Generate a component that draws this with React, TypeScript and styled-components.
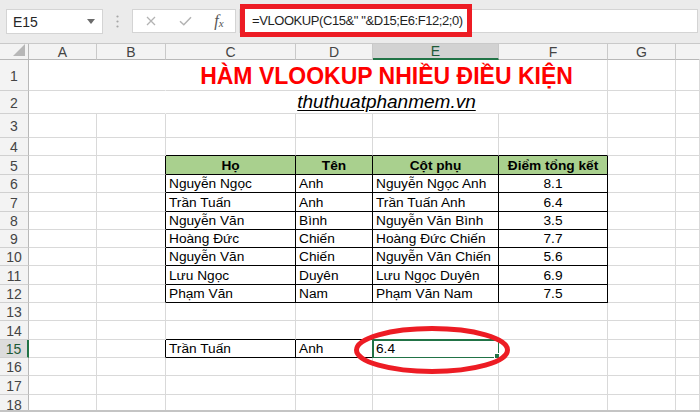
import React from 'react';
import styled, { createGlobalStyle } from 'styled-components';

const GlobalStyle = createGlobalStyle`
  html, body {
    margin: 0;
    padding: 0;
    background: #ffffff;
  }
  body {
    font-family: 'Liberation Sans', Arial, sans-serif;
    overflow: hidden;
  }
`;

const GRID = '#d9d9d9';
const INK = '#000000';
const GREEN = '#217346';

const LETTERS = ['A', 'B', 'C', 'D', 'E', 'F', 'G', ''];
const ROW_HEIGHTS = [31, 23, 24, 18, 19, 18, 19, 18, 18, 18, 19, 18, 18, 19, 18, 18, 19, 19];

const TABLE: Record<number, string[]> = {
  5: ['Họ', 'Tên', 'Cột phụ', 'Điểm tổng kết'],
  6: ['Nguyễn Ngọc', 'Anh', 'Nguyễn Ngọc Anh', '8.1'],
  7: ['Trần Tuấn', 'Anh', 'Trần Tuấn Anh', '6.4'],
  8: ['Nguyễn Văn', 'Bình', 'Nguyễn Văn Bình', '3.5'],
  9: ['Hoàng Đức', 'Chiến', 'Hoàng Đức Chiến', '7.7'],
  10: ['Nguyễn Văn', 'Chiến', 'Nguyễn Văn Chiến', '5.6'],
  11: ['Lưu Ngọc', 'Duyên', 'Lưu Ngọc Duyên', '6.9'],
  12: ['Phạm Văn', 'Nam', 'Phạm Văn Nam', '7.5'],
};

const LOOKUP = ['Trần Tuấn', 'Anh', '6.4'];
const ACTIVE_ROW = 15;
const ACTIVE_COL = 5;

const inBox = (r: number, c: number) =>
  (r >= 5 && r <= 12 && c >= 3 && c <= 6) || (r === 15 && (c === 3 || c === 4));

const cellText = (r: number, c: number): string => {
  if (TABLE[r] && c >= 3 && c <= 6) return TABLE[r][c - 3];
  if (r === 15 && c >= 3 && c <= 5) return LOOKUP[c - 3];
  return '';
};

const App = () => {
  const rows: React.ReactNode[] = [];

  ROW_HEIGHTS.forEach((_, i) => {
    const r = i + 1;
    rows.push(
      <RowHead key={`h${r}`} $active={r === ACTIVE_ROW}>
        {r}
      </RowHead>
    );

    if (r === 1 || r === 2) {
      rows.push(<Cell key={`${r}ab`} $span={2} $right="#ffffff" $bottom={GRID} />);
      rows.push(
        <Cell key={`${r}cf`} $span={4} $right={GRID} $bottom={GRID} $align="center">
          {r === 1 ? <Title>HÀM VLOOKUP NHIỀU ĐIỀU KIỆN</Title> : <Site>thuthuatphanmem.vn</Site>}
        </Cell>
      );
      rows.push(<Cell key={`${r}g`} $right={GRID} $bottom={GRID} />);
      rows.push(<Cell key={`${r}h`} $right={GRID} $bottom={GRID} />);
      return;
    }

    for (let c = 1; c <= 8; c++) {
      const right = inBox(r, c) || inBox(r, c + 1) ? INK : GRID;
      const bottom = inBox(r, c) || inBox(r + 1, c) ? INK : GRID;
      const isHeader = r === 5 && c >= 3 && c <= 6;
      const centered = isHeader || (c === 6 && r >= 6 && r <= 12);
      rows.push(
        <Cell
          key={`${r}-${c}`}
          $right={right}
          $bottom={bottom}
          $align={centered ? 'center' : 'left'}
          $bold={isHeader}
          $fill={isHeader ? '#a9d08e' : undefined}
          $selected={r === ACTIVE_ROW && c === ACTIVE_COL}
        >
          {cellText(r, c)}
        </Cell>
      );
    }
  });

  return (
    <>
      <GlobalStyle />
      <Window>
        <Toolbar>
          <NameBox>
            <span>E15</span>
            <svg width="8" height="5" viewBox="0 0 8 5">
              <path d="M0 0h8L4 5z" fill="#6b6b6b" />
            </svg>
          </NameBox>
          <Grip>
            <svg width="3" height="13" viewBox="0 0 3 13">
              <circle cx="1.5" cy="1.5" r="1.1" fill="#a6a6a6" />
              <circle cx="1.5" cy="6.5" r="1.1" fill="#a6a6a6" />
              <circle cx="1.5" cy="11.5" r="1.1" fill="#a6a6a6" />
            </svg>
          </Grip>
          <FxBox>
            <ToolIcon>
              <svg width="10" height="10" viewBox="0 0 10 10">
                <path d="M1 1l8 8M9 1l-8 8" stroke="#b3b3b3" strokeWidth="1.3" fill="none" />
              </svg>
            </ToolIcon>
            <ToolIcon>
              <svg width="13" height="10" viewBox="0 0 13 10">
                <path d="M1 5.2l3.8 3.6L12 1.2" stroke="#b3b3b3" strokeWidth="1.5" fill="none" />
              </svg>
            </ToolIcon>
            <ToolIcon>
              <Fx>
                f<sub>x</sub>
              </Fx>
            </ToolIcon>
          </FxBox>
          <FormulaInput>
            <Highlight>=VLOOKUP(C15&amp;" "&amp;D15;E6:F12;2;0)</Highlight>
          </FormulaInput>
        </Toolbar>

        <Sheet>
          <Corner>
            <svg width="12" height="12" viewBox="0 0 12 12">
              <path d="M12 0v12H0z" fill="#b7b7b7" />
            </svg>
          </Corner>
          {LETTERS.map((l, i) => (
            <ColHead key={`c${i}`} $active={i + 1 === ACTIVE_COL} $last={i === LETTERS.length - 1}>
              {l}
            </ColHead>
          ))}
          {rows}
          <Ring width="160" height="52" viewBox="0 0 160 52">
            <ellipse cx="80" cy="26" rx="75.5" ry="21.5" fill="none" stroke="#ed1c24" strokeWidth="5" />
          </Ring>
        </Sheet>
        <BottomEdge />
      </Window>
    </>
  );
};

export default App;

const Window = styled.div`
  width: 700px;
  height: 412px;
  overflow: hidden;
  background: #ffffff;
`;

const Toolbar = styled.div`
  height: 44px;
  box-sizing: border-box;
  display: flex;
  align-items: flex-start;
  padding: 9px 2px 0 6px;
  background: #ebebeb;
  border-bottom: 1px solid #c9c9c9;
`;

const NameBox = styled.div`
  width: 97px;
  height: 25px;
  box-sizing: border-box;
  display: flex;
  align-items: center;
  justify-content: space-between;
  padding: 0 7px 0 6px;
  background: #ffffff;
  border: 1px solid #d4d4d4;
  font-size: 14px;
  color: #262626;
`;

const Grip = styled.div`
  width: 29px;
  height: 25px;
  display: flex;
  align-items: center;
  justify-content: center;
`;

const FxBox = styled.div`
  width: 104px;
  height: 24px;
  box-sizing: border-box;
  display: grid;
  grid-template-columns: repeat(3, 34px);
  padding-left: 1px;
  background: #ffffff;
  border: 1px solid #d4d4d4;
`;

const ToolIcon = styled.div`
  display: flex;
  align-items: center;
  justify-content: center;
`;

const Fx = styled.span`
  font-family: 'Liberation Serif', 'Times New Roman', serif;
  font-style: italic;
  font-size: 16px;
  color: #555555;
  line-height: 1;

  sub {
    font-size: 11px;
    vertical-align: -1px;
  }
`;

const FormulaInput = styled.div`
  flex: 1;
  height: 24px;
  box-sizing: border-box;
  margin-left: 3px;
  display: flex;
  align-items: center;
  background: #ffffff;
  border: 1px solid #d4d4d4;
`;

const Highlight = styled.div`
  width: 232px;
  height: 33px;
  flex: none;
  box-sizing: border-box;
  display: flex;
  align-items: center;
  padding-left: 7px;
  margin-top: -1px;
  border: 5px solid #ed1c24;
  background: #ffffff;
  font-size: 13px;
  letter-spacing: -0.42px;
  color: #1f1f1f;
  white-space: nowrap;
`;

const Sheet = styled.div`
  position: relative;
  height: 366px;
  overflow: hidden;
  display: grid;
  grid-template-columns: 29px 68px 69px 130px 77px 126px 109px 68px 1fr;
  grid-template-rows: 16px ${ROW_HEIGHTS.map((h) => `${h}px`).join(' ')};
`;

const Corner = styled.div`
  box-sizing: border-box;
  display: flex;
  align-items: flex-end;
  justify-content: flex-end;
  padding: 0 3px 3px 0;
  background: #f3f3f3;
  border-right: 1px solid #b8b8b8;
  border-bottom: 1px solid #b8b8b8;
`;

const ColHead = styled.div<{ $active?: boolean; $last?: boolean }>`
  box-sizing: border-box;
  display: flex;
  align-items: center;
  justify-content: center;
  background: ${(p) => (p.$active ? '#d2d2d2' : '#f3f3f3')};
  border-right: 1px solid ${(p) => (p.$last ? 'transparent' : '#c9c9c9')};
  border-bottom: ${(p) => (p.$active ? `2px solid ${GREEN}` : '1px solid #b8b8b8')};
  font-size: 14px;
  color: ${(p) => (p.$active ? '#1d5a37' : '#444444')};
`;

const RowHead = styled.div<{ $active?: boolean }>`
  box-sizing: border-box;
  display: flex;
  align-items: center;
  justify-content: center;
  padding-top: 1px;
  background: ${(p) => (p.$active ? '#dcdcdc' : '#f3f3f3')};
  border-right: ${(p) => (p.$active ? `2px solid ${GREEN}` : '1px solid #b8b8b8')};
  border-bottom: 1px solid #d0d0d0;
  font-size: 14px;
  color: ${(p) => (p.$active ? '#1d5a37' : '#444444')};
`;

const Cell = styled.div<{
  $right: string;
  $bottom: string;
  $span?: number;
  $align?: 'left' | 'center';
  $bold?: boolean;
  $fill?: string;
  $selected?: boolean;
}>`
  grid-column: span ${(p) => p.$span ?? 1};
  position: relative;
  box-sizing: border-box;
  display: flex;
  align-items: flex-end;
  justify-content: ${(p) => (p.$align === 'center' ? 'center' : 'flex-start')};
  padding: 0 3px 1px;
  background: ${(p) => p.$fill ?? '#ffffff'};
  border-right: 1px solid ${(p) => p.$right};
  border-bottom: 1px solid ${(p) => p.$bottom};
  font-size: 13.7px;
  line-height: 15px;
  font-weight: ${(p) => (p.$bold ? 700 : 400)};
  color: #000000;
  white-space: nowrap;
  outline: ${(p) => (p.$selected ? `2px solid ${GREEN}` : 'none')};
  outline-offset: -1px;

  &::after {
    content: '';
    display: ${(p) => (p.$selected ? 'block' : 'none')};
    position: absolute;
    right: -3px;
    bottom: -3px;
    width: 5px;
    height: 5px;
    background: ${GREEN};
    border: 1px solid #ffffff;
  }
`;

const Title = styled.span`
  font-size: 23px;
  line-height: 26px;
  font-weight: 700;
  color: #ff0000;
`;

const Site = styled.span`
  font-size: 19px;
  line-height: 21px;
  font-style: italic;
  text-decoration: underline;
  text-underline-offset: 2px;
  color: #000000;
`;

const Ring = styled.svg`
  position: absolute;
  left: 352px;
  top: 280px;
  pointer-events: none;
`;

const BottomEdge = styled.div`
  height: 2px;
  background: #c4c4c4;
`;
